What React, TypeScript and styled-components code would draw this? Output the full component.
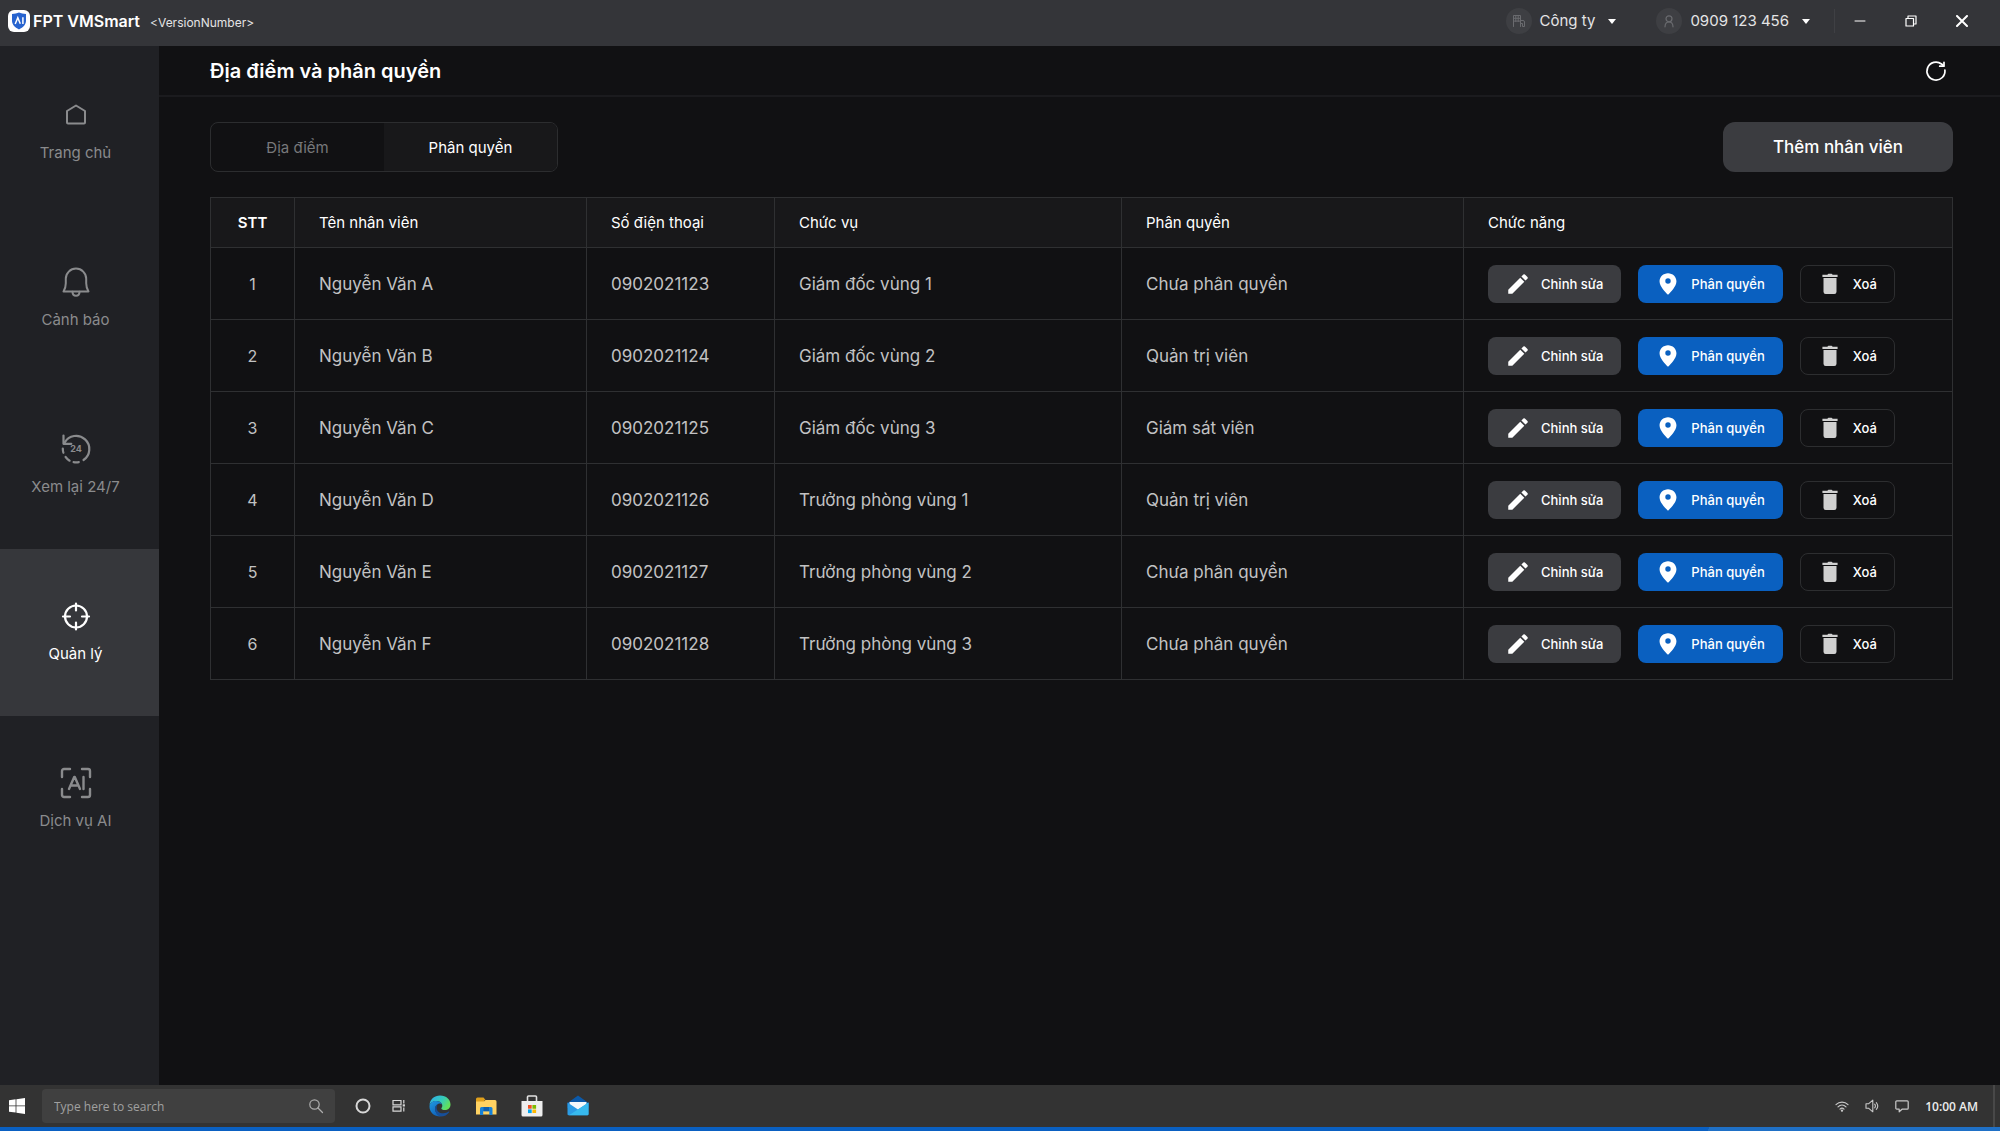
import React from "react";
import styled, { createGlobalStyle } from "styled-components";

const GlobalStyle = createGlobalStyle`
  *, *::before, *::after { box-sizing: border-box; }
  body {
    margin: 0;
    background: #111113;
    color: #fff;
    font-family: Inter, "Noto Sans", sans-serif;
    font-size: 16px;
  }
  button, input { font: inherit; color: inherit; }
  button { border: 0; padding: 0; background: none; cursor: pointer; }
  svg { display: block; flex: none; }
`;

const Screen = styled.div`
  min-height: 100vh;
  display: flex;
  flex-direction: column;
`;

/* ---------- title bar ---------- */
const TitleBar = styled.header`
  height: 46px;
  padding: 0 26px 4px 8px;
  display: flex;
  align-items: center;
  justify-content: space-between;
  background: #343539;
`;

const Brand = styled.div`
  display: flex;
  align-items: center;
  gap: 3px;
`;

const BrandName = styled.span`
  font-size: 16px;
  font-weight: 600;
  line-height: 24px;
`;

const Version = styled.span`
  margin-left: 7px;
  padding-top: 4px;
  font-size: 12px;
  line-height: 20px;
  color: #e4e4e5;
`;

const TitleActions = styled.div`
  display: flex;
  align-items: center;
`;

const AccountButton = styled.button`
  display: flex;
  align-items: center;
  gap: 8px;
  margin-right: 40px;
  font-size: 15px;
  line-height: 24px;
  color: #e4e4e5;
`;

const Avatar = styled.span`
  width: 26px;
  height: 26px;
  border-radius: 50%;
  display: grid;
  place-items: center;
  background: #3e3f43;
  color: #6a6b6f;
`;

const Caret = styled.span`
  margin-left: 5px;
  border: 4px solid transparent;
  border-top: 5px solid #fff;
  border-bottom: 0;
`;

const WindowButtons = styled.div`
  display: flex;
  gap: 27px;
  margin-left: -16px;
  padding-left: 13px;
  border-left: 1px solid #3f4044;
`;

const WindowButton = styled.button`
  width: 24px;
  height: 24px;
  display: grid;
  place-items: center;
  color: #fff;
`;

/* ---------- body ---------- */
const Body = styled.div`
  flex: 1;
  display: flex;
`;

const Sidebar = styled.nav`
  width: 159px;
  flex: none;
  padding-top: 2px;
  display: flex;
  flex-direction: column;
  background: #202125;
`;

const NavItem = styled.a<{ $active?: boolean }>`
  height: 167px;
  padding: 49px 8px 0 0;
  display: flex;
  flex-direction: column;
  align-items: center;
  gap: 8px;
  font-size: 15px;
  line-height: 24px;
  text-decoration: none;
  color: ${(p) => (p.$active ? "#fff" : "#8a8b8d")};
  background: ${(p) => (p.$active ? "#36373b" : "transparent")};
`;

const Main = styled.main`
  flex: 1;
  min-width: 0;
`;

const PageHeader = styled.div`
  height: 51px;
  padding: 0 52px 0 51px;
  display: flex;
  align-items: center;
  justify-content: space-between;
  border-bottom: 2px solid #1b1b1e;
`;

const PageTitle = styled.h1`
  margin: 0;
  font-size: 20px;
  font-weight: 600;
  line-height: 28px;
`;

const Content = styled.section`
  padding: 25px 47px 40px 51px;
`;

const Toolbar = styled.div`
  display: flex;
  align-items: center;
  justify-content: space-between;
  margin-bottom: 25px;
`;

const Tabs = styled.div`
  display: flex;
  width: 348px;
  height: 50px;
  overflow: hidden;
  border: 1px solid #2c2d2f;
  border-radius: 8px;
`;

const Tab = styled.button<{ $active?: boolean }>`
  flex: 1;
  font-size: 15px;
  color: ${(p) => (p.$active ? "#fff" : "#77787a")};
  background: ${(p) => (p.$active ? "#18181a" : "transparent")};
`;

const AddButton = styled.button`
  width: 230px;
  height: 50px;
  border-radius: 12px;
  background: #3b3c40;
  font-size: 17px;
  font-weight: 500;
`;

/* ---------- table ---------- */
const Table = styled.table`
  width: 100%;
  table-layout: fixed;
  border-collapse: collapse;
`;

const Col = styled.col<{ $share: number }>`
  width: ${(p) => (p.$share / 1742) * 100}%;
`;

const Th = styled.th`
  height: 50px;
  padding: 0 24px;
  border: 1px solid #2f3032;
  background: #18181a;
  font-size: 15px;
  font-weight: 400;
  text-align: left;
  &:first-child { padding: 0; text-align: center; font-weight: 600; }
`;

const Td = styled.td`
  height: 72px;
  padding: 0 24px;
  border: 1px solid #2f3032;
  font-size: 17px;
  color: #c2c2c3;
  &:first-child { padding: 0; text-align: center; font-size: 16px; }
`;

const RowActions = styled.div`
  display: flex;
  gap: 17px;
`;

type Tone = "neutral" | "primary" | "outline";
const toneFill: Record<Tone, string> = {
  neutral: "#3b3c40",
  primary: "#0a60c0",
  outline: "transparent",
};

const ActionButton = styled.button<{ $tone: Tone }>`
  height: 38px;
  padding: 0 17px 0 16px;
  display: flex;
  align-items: center;
  gap: 10px;
  border: 1px solid ${(p) => (p.$tone === "outline" ? "#2d2e30" : "transparent")};
  border-radius: 8px;
  background: ${(p) => toneFill[p.$tone]};
  font-size: 13px;
  font-weight: 500;
  color: #fff;
  white-space: nowrap;
`;

/* ---------- taskbar ---------- */
const Taskbar = styled.footer`
  height: 42px;
  padding: 0 5px 0 8px;
  display: flex;
  align-items: center;
  background: #333;
  font-family: "Open Sans", "Noto Sans", sans-serif;
`;

const StartButton = styled.button`
  margin-right: 16px;
`;

const SearchBox = styled.label`
  width: 293px;
  height: 34px;
  padding: 0 11px 0 12px;
  display: flex;
  align-items: center;
  border-radius: 4px;
  background: #404040;
  color: #adadad;
`;

const SearchInput = styled.input`
  flex: 1;
  min-width: 0;
  padding: 0;
  border: 0;
  outline: 0;
  background: none;
  font-size: 12px;
  &::placeholder { color: #a0a0a0; opacity: 1; }
`;

const TaskIcons = styled.div`
  display: flex;
  align-items: center;
  gap: 22px;
  margin-left: 21px;
`;

const TaskButton = styled.button<{ $narrow?: boolean }>`
  width: ${(p) => (p.$narrow ? "14px" : "24px")};
  height: 24px;
  display: flex;
  align-items: center;
  justify-content: center;
`;

const Tray = styled.div`
  height: 100%;
  margin-left: auto;
  padding-right: 15px;
  display: flex;
  align-items: center;
  gap: 16px;
  border-right: 2px solid #484848;
  color: #c8c8c8;
`;

const Clock = styled.time`
  font-size: 12px;
  font-weight: 600;
  color: #ececec;
`;

const AccentBar = styled.div`
  height: 4px;
  background: linear-gradient(110deg, #0a60c2 85.4%, #1f70c6 85.4%);
`;

/* ---------- icons ---------- */
const stroke = {
  fill: "none",
  stroke: "currentColor",
  strokeLinecap: "round" as const,
  strokeLinejoin: "round" as const,
};

const AppLogo = () => (
  <svg width="22" height="22" viewBox="0 0 22 22">
    <rect width="22" height="22" rx="6" fill="#fff" />
    <path d="M11 2.6c2 .9 4.300 1.300 7 1.300v6.600c0 4-2.700 6.900-7 8.900-4.300-2-7-4.900-7-8.900V3.900c2.700 0 5-.4 7-1.300z" fill="#2864cf" />
    <path d="M7.200 14 9.800 7.800l2.500 6M14.900 7.200v6.800" fill="none" stroke="#fff" strokeWidth="1.500" />
  </svg>
);

const BuildingIcon = () => (
  <svg width="14" height="14" viewBox="0 0 14 14" {...stroke}>
    <path d="M1.500 12.500V1.500h7v8M1.500 4.300h7M1.500 7.100h7M3.800 1.500v6M6.200 1.500v6" />
    <path d="M8.500 6.500H11a1.500 1.500 0 0 1 1.500 1.500v4.500h-2V9.500h-2v3" />
  </svg>
);

const PersonIcon = () => (
  <svg width="14" height="14" viewBox="0 0 14 14" {...stroke} strokeWidth="1.200">
    <circle cx="7" cy="4.800" r="3" />
    <path d="M3 12.800c.1-3 1.600-4.800 4-4.800s3.900 1.800 4 4.800" />
  </svg>
);

const HomeIcon = () => (
  <svg width="36" height="36" viewBox="0 0 36 36" {...stroke} strokeWidth="2">
    <path d="M9 14 18 8.500l9 5.500v11.500a1 1 0 0 1-1 1H10a1 1 0 0 1-1-1z" />
  </svg>
);

const BellIcon = () => (
  <svg width="36" height="36" viewBox="0 0 36 36" {...stroke} strokeWidth="2">
    <path d="M5.500 27.500c1.600-2.500 2.300-4.800 2.300-8.200v-4.500a10.200 10.200 0 0 1 20.400 0v4.500c0 3.400.7 5.700 2.300 8.200z" />
    <path d="M14.500 27.800c0 2.500 1.400 4 3.500 4s3.500-1.500 3.500-4" />
  </svg>
);

const ReplayIcon = () => (
  <svg width="36" height="36" viewBox="0 0 36 36" {...stroke} strokeWidth="2.200">
    <path d="M6.600 11.600A13.200 13.200 0 1 1 25.500 29" />
    <path d="M5.500 4.500v8.300h7.800" />
    <path d="M4.800 17.500c0 1.700.2 3 .6 4.300M7.600 26c1.200 1.600 2.400 2.700 4 3.700M15.600 31.200c1.800.3 3.400.3 5.200-.1" />
    <text x="18" y="21.200" textAnchor="middle" fontFamily="Inter, sans-serif" fontSize="9" fontWeight="700" fill="currentColor" stroke="none">24</text>
  </svg>
);

const TargetIcon = () => (
  <svg width="36" height="36" viewBox="0 0 36 36" {...stroke} strokeWidth="2.200">
    <circle cx="18" cy="18.500" r="11" />
    <path d="M18 5.500v7M18 24.500v7M5 18.500h7M24 18.500h7" />
  </svg>
);

const AiIcon = () => (
  <svg width="36" height="36" viewBox="0 0 36 36" {...stroke} strokeWidth="2.400">
    <path d="M4 12V6a2 2 0 0 1 2-2h6M24 4h6a2 2 0 0 1 2 2v6M32 24v6a2 2 0 0 1-2 2h-6M12 32H6a2 2 0 0 1-2-2v-6" />
    <path d="M11 24 16.200 12h.6L22 24M13 20.500h7M25.500 12v12" />
  </svg>
);

const RefreshIcon = () => (
  <svg width="24" height="24" viewBox="0 0 24 24" {...stroke} strokeWidth="1.700">
    <path d="M20.900 11A9 9 0 1 1 17.500 5l1.800 1.500" />
    <path d="M20 3.300v3.900h-4.300" />
  </svg>
);

const PencilIcon = () => (
  <svg width="26" height="26" viewBox="0 0 24 24" fill="currentColor">
    <path d="M3 17.250V21h3.750L17.810 9.940l-3.750-3.750L3 17.250zM20.710 7.040a1 1 0 0 0 0-1.410l-2.340-2.340a1 1 0 0 0-1.410 0l-1.830 1.830 3.750 3.750 1.830-1.830z" />
  </svg>
);

const PinIcon = () => (
  <svg width="26" height="26" viewBox="0 0 24 24" fill="currentColor">
    <path fillRule="evenodd" d="M12 2C7.700 2 4.200 5.300 4.200 9.400c0 5 5.300 9.700 7.800 12.600 2.500-2.900 7.800-7.600 7.800-12.600C19.800 5.300 16.300 2 12 2zm0 9.800a2.500 2.500 0 1 1 0-5 2.500 2.500 0 0 1 0 5z" />
  </svg>
);

const TrashIcon = () => (
  <svg width="26" height="26" viewBox="0 0 24 24" fill="#d0d0d0">
    <path d="M6 6.500h12v12.700a2 2 0 0 1-2 2H8a2 2 0 0 1-2-2zM5 3.500h4.500l1-.9h3l1 .9H19v2H5z" />
  </svg>
);

const StartIcon = () => (
  <svg width="18" height="18" viewBox="0 0 18 18" fill="#fff">
    <path d="M1 3.200 7.600 2.300v6.200H1zM8.400 2.200 17 1v7.500H8.400zM1 9.300h6.600v6.300L1 14.700zM8.400 9.300H17V17l-8.600-1.300z" />
  </svg>
);

const SearchIcon = () => (
  <svg width="16" height="16" viewBox="0 0 16 16" {...stroke} strokeWidth="1.200">
    <circle cx="6.500" cy="6.500" r="4.700" />
    <path d="m10 10 4.500 4.500" />
  </svg>
);

const TaskViewIcon = () => (
  <svg width="14" height="14" viewBox="0 0 14 14" fill="none" stroke="#d8d8d8" strokeWidth="1.200">
    <path d="M1 1.500h8v4.300H1zM1 7.800h8v4.300H1zM11.800 1v3.500M11.800 8.500v4" />
    <path d="M11.800 5.300v2.200" strokeWidth="2.200" />
  </svg>
);

const EdgeIcon = () => (
  <svg width="24" height="24" viewBox="0 0 24 24">
    <defs>
      <linearGradient id="edgeTop" x1="0" y1="0" x2="1" y2="0.500">
        <stop offset="0.100" stopColor="#2fb0e6" />
        <stop offset="0.600" stopColor="#35cbb9" />
        <stop offset="1" stopColor="#62e05a" />
      </linearGradient>
      <linearGradient id="edgeSide" x1="0" y1="0" x2="0.600" y2="1">
        <stop offset="0" stopColor="#1f9be2" />
        <stop offset="1" stopColor="#1060b8" />
      </linearGradient>
    </defs>
    <path d="M1.500 11C2 5.300 6.400 1.500 12 1.500c6.400 0 10.500 4.200 10.500 9 0 3.600-2.700 5.600-5.600 5.600-2.300 0-3.600-.8-3.600-1.600 0-.6 1-1 1-2.800 0-2.400-2.400-4.600-5.800-4.600C5 7.100 2.200 9 1.500 11z" fill="url(#edgeTop)" />
    <path d="M8.900 22C4.500 20.900 1.500 17 1.500 12.500c0-3.300 3-5.400 6.500-5.400 3 0 5.500 1.500 6.200 3.500-1-.8-2.200-1.100-3-1-2.600.5-4.200 2.800-4.100 5.400.1 3 2 5.800 5.400 7.300-1.200.2-2.500 0-3.600-.3z" fill="url(#edgeSide)" />
    <path d="M11.200 9.600c-1.800 1-2.600 2.400-2.600 4.400 0 3 2.900 5.500 6.800 5.300 2.100-.1 3.800-.8 5.200-1.700.4-.2.800.2.500.6C19.300 21 16 22.600 12.500 22.500c-3.500-1.500-5.500-4.400-5.500-7.500 0-2.500 1.600-5 4.200-5.400z" fill="#174f99" />
  </svg>
);

const FolderIcon = () => (
  <svg width="24" height="24" viewBox="0 0 24 24">
    <path d="M2 5A1.500 1.500 0 0 1 3.500 3.500h6L11.500 6h-1v3H2z" fill="#e0a01c" />
    <path d="M2 7.500h8L11.500 6H21a1.500 1.500 0 0 1 1.500 1.500V20.500H2z" fill="#ffd262" />
    <path d="M6 21v-6.500A1.500 1.500 0 0 1 7.500 13H17a1.500 1.500 0 0 1 1.500 1.500V21h-3.200v-3.800H9.200V21z" fill="#1681d8" />
    <path d="M9.500 13H15v4.200H9.500z" fill="#0c5ead" />
  </svg>
);

const StoreIcon = () => (
  <svg width="24" height="24" viewBox="0 0 24 24">
    <path d="M7.500 8V3a1 1 0 0 1 1-1h7a1 1 0 0 1 1 1v5" fill="none" stroke="#e2e2e2" strokeWidth="1.600" />
    <path d="M1.500 7h21v14a1.500 1.500 0 0 1-1.500 1.500H3A1.500 1.500 0 0 1 1.500 21z" fill="#eee" />
    <path d="M8 11h3.700v3.700H8z" fill="#f25022" />
    <path d="M12.400 11h3.700v3.700h-3.700z" fill="#7fba00" />
    <path d="M8 15.400h3.700v3.700H8z" fill="#00a4ef" />
    <path d="M12.400 15.400h3.700v3.700h-3.700z" fill="#ffb900" />
  </svg>
);

const MailIcon = () => (
  <svg width="24" height="24" viewBox="0 0 24 24">
    <path d="M1.500 9 12 1.500 22.500 9v5h-21z" fill="#0c59a8" />
    <path d="M3.500 8h17v8h-17z" fill="#f4f8fb" />
    <path d="M1.500 8.500 12 15.500l10.500-7V20a1.200 1.200 0 0 1-1.200 1.200H2.700A1.200 1.200 0 0 1 1.500 20z" fill="#2b9be4" />
    <path d="M22.500 8.500 3 21.200h18.300a1.200 1.200 0 0 0 1.200-1.200z" fill="#37b9ee" />
  </svg>
);

const WifiIcon = () => (
  <svg width="14" height="14" viewBox="0 0 14 14" {...stroke} strokeWidth="1.200">
    <path d="M1 5.600c3.400-3.400 8.600-3.400 12 0M3 7.900c2.300-2.300 5.700-2.300 8 0M5 10.100c1.200-1.200 2.800-1.200 4 0" />
    <circle cx="7" cy="11.600" r=".6" fill="currentColor" />
  </svg>
);

const SpeakerIcon = () => (
  <svg width="14" height="14" viewBox="0 0 14 14" {...stroke} strokeWidth="1.100">
    <path d="M1 4.800h2.500L7.800 1.200v11.600L3.500 9.200H1zM9.700 5.200c.8 1 .8 2.600 0 3.600M11.300 3.600c1.700 2 1.700 4.800 0 6.800" />
  </svg>
);

const ChatIcon = () => (
  <svg width="14" height="14" viewBox="0 0 14 14" {...stroke} strokeWidth="1.200">
    <path d="M1.800 1.800h10.400a1 1 0 0 1 1 1v6.400a1 1 0 0 1-1 1H7l-2.800 2.600v-2.600H1.800a1 1 0 0 1-1-1V2.800a1 1 0 0 1 1-1z" />
  </svg>
);

/* ---------- data ---------- */
const navItems = [
  { label: "Trang chủ", Icon: HomeIcon },
  { label: "Cảnh báo", Icon: BellIcon },
  { label: "Xem lại 24/7", Icon: ReplayIcon },
  { label: "Quản lý", Icon: TargetIcon, active: true },
  { label: "Dịch vụ AI", Icon: AiIcon },
];

const columns = [
  { label: "STT", share: 84 },
  { label: "Tên nhân viên", share: 292 },
  { label: "Số điện thoại", share: 188 },
  { label: "Chức vụ", share: 347 },
  { label: "Phân quyền", share: 342 },
  { label: "Chức năng", share: 489 },
];

const employees = [
  ["Nguyễn Văn A", "0902021123", "Giám đốc vùng 1", "Chưa phân quyền"],
  ["Nguyễn Văn B", "0902021124", "Giám đốc vùng 2", "Quản trị viên"],
  ["Nguyễn Văn C", "0902021125", "Giám đốc vùng 3", "Giám sát viên"],
  ["Nguyễn Văn D", "0902021126", "Trưởng phòng vùng 1", "Quản trị viên"],
  ["Nguyễn Văn E", "0902021127", "Trưởng phòng vùng 2", "Chưa phân quyền"],
  ["Nguyễn Văn F", "0902021128", "Trưởng phòng vùng 3", "Chưa phân quyền"],
];

export default function App() {
  return (
    <Screen>
      <GlobalStyle />
      <TitleBar>
        <Brand>
          <AppLogo />
          <BrandName>FPT VMSmart</BrandName>
          <Version>&lt;VersionNumber&gt;</Version>
        </Brand>
        <TitleActions>
          <AccountButton>
            <Avatar><BuildingIcon /></Avatar>
            Công ty
            <Caret />
          </AccountButton>
          <AccountButton>
            <Avatar><PersonIcon /></Avatar>
            0909 123 456
            <Caret />
          </AccountButton>
          <WindowButtons>
            <WindowButton aria-label="Minimize">
              <svg width="12" height="12" viewBox="0 0 12 12" {...stroke}><path d="M1 6h10" /></svg>
            </WindowButton>
            <WindowButton aria-label="Restore">
              <svg width="12" height="12" viewBox="0 0 12 12" {...stroke} strokeWidth="1.200">
                <path d="M1 3.500h7.500V11H1zM3 3.500V1h8v8H8.500" />
              </svg>
            </WindowButton>
            <WindowButton aria-label="Close">
              <svg width="12" height="12" viewBox="0 0 12 12" {...stroke} strokeWidth="2"><path d="m1 1 10 10M11 1 1 11" /></svg>
            </WindowButton>
          </WindowButtons>
        </TitleActions>
      </TitleBar>

      <Body>
        <Sidebar>
          {navItems.map(({ label, Icon, active }) => (
            <NavItem key={label} href="#" $active={active}>
              <Icon />
              {label}
            </NavItem>
          ))}
        </Sidebar>

        <Main>
          <PageHeader>
            <PageTitle>Địa điểm và phân quyền</PageTitle>
            <button aria-label="Refresh"><RefreshIcon /></button>
          </PageHeader>
          <Content>
            <Toolbar>
              <Tabs role="tablist">
                <Tab role="tab">Địa điểm</Tab>
                <Tab role="tab" aria-selected $active>Phân quyền</Tab>
              </Tabs>
              <AddButton>Thêm nhân viên</AddButton>
            </Toolbar>
            <Table>
              <colgroup>
                {columns.map((c) => <Col key={c.label} $share={c.share} />)}
              </colgroup>
              <thead>
                <tr>{columns.map((c) => <Th key={c.label} scope="col">{c.label}</Th>)}</tr>
              </thead>
              <tbody>
                {employees.map((cells, i) => (
                  <tr key={cells[0]}>
                    <Td>{i + 1}</Td>
                    {cells.map((cell) => <Td key={cell}>{cell}</Td>)}
                    <Td>
                      <RowActions>
                        <ActionButton $tone="neutral"><PencilIcon />Chỉnh sửa</ActionButton>
                        <ActionButton $tone="primary"><PinIcon />Phân quyền</ActionButton>
                        <ActionButton $tone="outline"><TrashIcon />Xoá</ActionButton>
                      </RowActions>
                    </Td>
                  </tr>
                ))}
              </tbody>
            </Table>
          </Content>
        </Main>
      </Body>

      <Taskbar>
        <StartButton aria-label="Start"><StartIcon /></StartButton>
        <SearchBox>
          <SearchInput type="text" placeholder="Type here to search" aria-label="Type here to search" />
          <SearchIcon />
        </SearchBox>
        <TaskIcons>
          <TaskButton $narrow aria-label="Cortana">
            <svg width="16" height="16" viewBox="0 0 16 16"><circle cx="8" cy="8" r="6.500" fill="none" stroke="#d8d8d8" strokeWidth="2" /></svg>
          </TaskButton>
          <TaskButton $narrow aria-label="Task view"><TaskViewIcon /></TaskButton>
          <TaskButton aria-label="Edge"><EdgeIcon /></TaskButton>
          <TaskButton aria-label="Files"><FolderIcon /></TaskButton>
          <TaskButton aria-label="Store"><StoreIcon /></TaskButton>
          <TaskButton aria-label="Mail"><MailIcon /></TaskButton>
        </TaskIcons>
        <Tray>
          <WifiIcon />
          <SpeakerIcon />
          <ChatIcon />
          <Clock>10:00 AM</Clock>
        </Tray>
      </Taskbar>
      <AccentBar />
    </Screen>
  );
}
